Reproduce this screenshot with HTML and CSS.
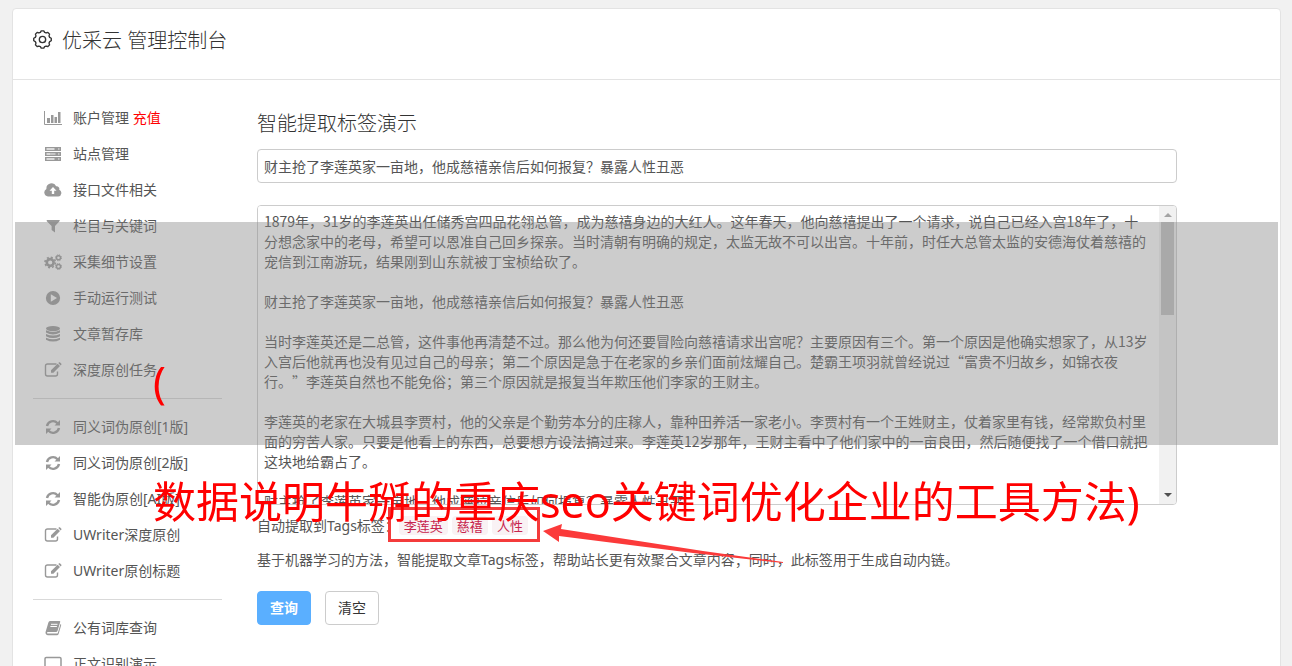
FILE: index.html
```html
<!DOCTYPE html>
<html lang="zh-CN">
<head>
<meta charset="utf-8">
<title>优采云 管理控制台</title>
<link rel="stylesheet" href="styles.css">
</head>
<body>
<svg class="sprite" aria-hidden="true">
  <symbol id="i-chart" viewBox="0 0 18 18"><path d="M.5 2v13.500H18" fill="none" stroke="currentColor"/><path d="M3 9h3v5H3zM7 6h2.500v8H7zM10.500 8h2.500v6h-2.500zM14 3h2.500v11H14z" fill="currentColor"/></symbol>
  <symbol id="i-server" viewBox="0 0 18 18"><path d="M1 2h16v4H1zM1 7h16v4H1zM1 12h16v4H1z" fill="currentColor"/><path d="M2.500 4h8M2.500 9h4M2.500 14h8" stroke="#eee" stroke-width="1.300"/><path d="M14 4h1.500M14 9h1.500M14 14h1.500" stroke="#eee" stroke-width="1"/><path d="M6.500 9h5" stroke="#ddd" stroke-width="1.300"/></symbol>
  <symbol id="i-cloud" viewBox="0 0 18 18"><path d="M4 15.500A4 4 0 0 1 2.400 8 5.200 5.200 0 0 1 12.200 5.200a2.700 2.700 0 0 1 3 3.600A3.500 3.500 0 0 1 14.300 15.500z" fill="currentColor"/><path d="M9 6 5.500 9.700h2.300V13h2.400V9.700h2.300z" fill="#fff"/></symbol>
  <symbol id="i-filter" viewBox="0 0 18 18"><path d="M3 3h12.500q.6.500 0 1.200L11 9v6.500L7.600 13V9L2.800 4.200Q2.300 3.500 3 3z" fill="currentColor"/></symbol>
  <symbol id="i-cogs" viewBox="0 0 18 18"><g fill="none" stroke="currentColor"><circle cx="6.200" cy="9.500" r="3.400" stroke-width="2.600"/><circle cx="6.200" cy="9.500" r="5.200" stroke-width="1.600" stroke-dasharray="2 2.080"/><circle cx="14.500" cy="4.800" r="2" stroke-width="1.400"/><circle cx="14.500" cy="4.800" r="3" stroke-width="1" stroke-dasharray="1.300 1.056"/><circle cx="14.500" cy="13.500" r="2" stroke-width="1.400"/><circle cx="14.500" cy="13.500" r="3" stroke-width="1" stroke-dasharray="1.300 1.056"/></g></symbol>
  <symbol id="i-play" viewBox="0 0 18 18"><circle cx="9" cy="9" r="7.100" fill="currentColor"/><path d="M6.800 5.300v7.400L13 9z" fill="#fff"/></symbol>
  <symbol id="i-db" viewBox="0 0 18 18"><g fill="currentColor"><ellipse cx="9" cy="3.600" rx="7" ry="2.600"/><path d="M2 5.300q7 3.200 14 0v2.200q-7 3.800-14 0zM2 9q7 3.200 14 0v2.200q-7 3.800-14 0zM2 12.700q7 3.200 14 0v2q-7 3.800-14 0z"/></g></symbol>
  <symbol id="i-edit" viewBox="0 0 18 18"><path d="M12.500 3H3.500Q1.500 3 1.500 5v8q0 2 2 2h8q2 0 2-2v-2.500" fill="none" stroke="currentColor" stroke-width="1.400"/><path d="M7 9.300 13.600 2.700 16 5.100 9.400 11.700H7zM14.300 2l.8-.7q.4-.3.800 0l1.500 1.500q.4.400 0 .8l-.7.800z" fill="currentColor"/></symbol>
  <symbol id="i-sync" viewBox="0 0 18 18"><path d="M3 8a6.100 6.100 0 0 1 10.500-2.800M15 10a6.100 6.100 0 0 1-10.500 2.800" fill="none" stroke="currentColor" stroke-width="2.400"/><path d="M16 2v5.500h-5.500zM2 16v-5.500h5.500z" fill="currentColor"/></symbol>
  <symbol id="i-book" viewBox="0 0 18 18"><path d="M6 2h9.500q1 .1.700 1.100L13.500 12q-.4 1-1.500 1H4q-1.200.1-1 1 .2.600 1 .6h9q.6 0 .8-.6L16.500 5q1 .4.600 1.500L14.600 15q-.4 1.200-1.600 1.200H4Q1.400 16 1.500 13.300L4.400 3.400Q4.800 2.100 6 2z" fill="currentColor"/><path d="M7 5.300h6.500M6.400 7.500h6.500" stroke="#fff"/></symbol>
  <symbol id="i-screen" viewBox="0 0 18 18"><rect x="1" y="2.500" width="16" height="11" rx="1.200" fill="none" stroke="currentColor" stroke-width="1.500"/><path d="M6 16h6" stroke="currentColor" stroke-width="1.500"/></symbol>
</svg>

<div class="card">
  <header class="header">
    <svg class="gear" viewBox="0 0 18 18" aria-hidden="true"><g fill="none" stroke="currentColor" stroke-width="1.300"><circle cx="9" cy="9" r="3"/><path d="M7 2.300 7.800.8h2.400L11 2.300l1.400.5 1.700-.5 1.600 1.600-.5 1.700.6 1.400 1.500.8v2.400l-1.500.8-.6 1.400.5 1.700-1.600 1.600-1.700-.5-1.400.5-.8 1.500H7.800L7 15.700l-1.400-.5-1.700.5-1.600-1.600.5-1.700-.6-1.400-1.500-.8V7.800L2.200 7l.6-1.400-.5-1.700 1.600-1.600 1.700.5z" stroke-linejoin="round"/></g></svg>
    <h1 class="brand">优采云 管理控制台</h1>
  </header>
  <div class="body">
    <nav class="sidebar">
      <ul class="menu">
        <li><a href="#"><svg><use href="#i-chart"/></svg><span>账户管理 <span class="hot">充值</span></span></a></li>
        <li><a href="#"><svg><use href="#i-server"/></svg><span>站点管理</span></a></li>
        <li><a href="#"><svg><use href="#i-cloud"/></svg><span>接口文件相关</span></a></li>
        <li><a href="#"><svg><use href="#i-filter"/></svg><span>栏目与关键词</span></a></li>
        <li><a href="#"><svg><use href="#i-cogs"/></svg><span>采集细节设置</span></a></li>
        <li><a href="#"><svg><use href="#i-play"/></svg><span>手动运行测试</span></a></li>
        <li><a href="#"><svg><use href="#i-db"/></svg><span>文章暂存库</span></a></li>
        <li><a href="#"><svg><use href="#i-edit"/></svg><span>深度原创任务</span></a></li>
      </ul>
      <hr class="rule">
      <ul class="menu">
        <li><a href="#"><svg><use href="#i-sync"/></svg><span>同义词伪原创[1版]</span></a></li>
        <li><a href="#"><svg><use href="#i-sync"/></svg><span>同义词伪原创[2版]</span></a></li>
        <li><a href="#"><svg><use href="#i-sync"/></svg><span>智能伪原创[AI版]</span></a></li>
        <li><a href="#"><svg><use href="#i-edit"/></svg><span>UWriter深度原创</span></a></li>
        <li><a href="#"><svg><use href="#i-edit"/></svg><span>UWriter原创标题</span></a></li>
      </ul>
      <hr class="rule">
      <ul class="menu">
        <li><a href="#"><svg><use href="#i-book"/></svg><span>公有词库查询</span></a></li>
        <li><a href="#"><svg><use href="#i-screen"/></svg><span>正文识别演示</span></a></li>
      </ul>
    </nav>
    <main class="main">
      <h2 class="title">智能提取标签演示</h2>
      <input class="field" type="text" aria-label="标题" value="财主抢了李莲英家一亩地，他成慈禧亲信后如何报复？暴露人性丑恶">
      <div class="editor">
        <textarea class="text" aria-label="正文">1879年，31岁的李莲英出任储秀宫四品花翎总管，成为慈禧身边的大红人。这年春天，他向慈禧提出了一个请求，说自己已经入宫18年了，十分想念家中的老母，希望可以恩准自己回乡探亲。当时清朝有明确的规定，太监无故不可以出宫。十年前，时任大总管太监的安德海仗着慈禧的宠信到江南游玩，结果刚到山东就被丁宝桢给砍了。

财主抢了李莲英家一亩地，他成慈禧亲信后如何报复？暴露人性丑恶

当时李莲英还是二总管，这件事他再清楚不过。那么他为何还要冒险向慈禧请求出宫呢？主要原因有三个。第一个原因是他确实想家了，从13岁入宫后他就再也没有见过自己的母亲；第二个原因是急于在老家的乡亲们面前炫耀自己。楚霸王项羽就曾经说过“富贵不归故乡，如锦衣夜行。”李莲英自然也不能免俗；第三个原因就是报复当年欺压他们李家的王财主。

李莲英的老家在大城县李贾村，他的父亲是个勤劳本分的庄稼人，靠种田养活一家老小。李贾村有一个王姓财主，仗着家里有钱，经常欺负村里面的穷苦人家。只要是他看上的东西，总要想方设法搞过来。李莲英12岁那年，王财主看中了他们家中的一亩良田，然后随便找了一个借口就把这块地给霸占了。

财主抢了李莲英家一亩地，他成慈禧亲信后如何报复？暴露人性丑恶</textarea>
        <div class="scrollbar" aria-hidden="true"><i class="up"></i><i class="thumb"></i><i class="down"></i></div>
      </div>
      <div class="tags">自动提取到Tags标签：<span class="marked"><code>李莲英</code><code>慈禧</code><code>人性</code>
        <svg class="arrow" viewBox="0 0 240 42" aria-hidden="true"><path d="M0 9 19 2 18 7 160 29 240 40v1L150 31 16 14 16 20z" fill="#fb3a3a"/></svg></span></div>
      <p class="note">基于机器学习的方法，智能提取文章Tags标签，帮助站长更有效聚合文章内容；同时，此标签用于生成自动内链。</p>
      <div class="actions">
        <button class="btn primary" type="button">查询</button>
        <button class="btn" type="button">清空</button>
      </div>
    </main>
  </div>
</div>
<div class="band"></div>
<div class="caption">(<br>数据说明牛掰的重庆seo关键词优化企业的工具方法)</div>
</body>
</html>
```
FILE: styles.css
```css
* { box-sizing: border-box; }

body {
  position: relative;
  height: 100vh;
  margin: 0;
  padding: 8px 11px 0 12px;
  overflow: hidden;
  background: #f1f1f1;
  color: #555;
  font: 14px/20px "Noto Sans", "Noto Sans CJK SC", sans-serif;
}

.sprite { display: none; }

.card {
  background: #fff;
  border: 1px solid #e3e3e3;
  border-radius: 4px;
}

.header {
  display: flex;
  align-items: center;
  gap: 10px;
  height: 71px;
  padding: 0 20px 6px;
  border-bottom: 1px solid #e3e3e3;
  color: #333;
}

.gear { width: 19px; height: 19px; margin-bottom: 4px; }

.brand {
  margin: 0;
  font-size: 20px;
  font-weight: 300;
  line-height: 28px;
}

.body {
  display: flex;
  gap: 35px;
  padding: 20px;
}

.sidebar { flex: 0 0 189px; }

.menu { margin: 0; padding: 0; list-style: none; }

.menu a {
  display: flex;
  align-items: center;
  gap: 11px;
  height: 36px;
  padding-left: 11px;
  color: #555;
  text-decoration: none;
}

.menu svg { width: 18px; height: 18px; color: #999; }

.hot { color: #f00; }

.rule {
  margin: 10px 0;
  border: 0;
  border-top: 1px solid #d9d9d9;
}

.main { flex: 1; padding: 9px 83px 0 0; }

.title {
  margin: 0 0 10px;
  color: #333;
  font-size: 20px;
  font-weight: 300;
  line-height: 30px;
}

.field {
  display: block;
  width: 100%;
  height: 34px;
  padding: 6px;
  border: 1px solid #ccc;
  border-radius: 4px;
  color: #555;
  font: inherit;
}

.editor {
  display: flex;
  height: 300px;
  margin: 22px 0 11px;
  overflow: hidden;
  border: 1px solid #ccc;
  border-radius: 4px;
}

.text {
  flex: 1;
  padding: 5px 9px 5px 6px;
  border: 0;
  outline: 0;
  resize: none;
  scrollbar-width: none;
  text-spacing-trim: space-all;
  color: #555;
  font: 14px/20px "Noto Sans CJK SC", sans-serif;
}

.scrollbar {
  display: flex;
  flex-direction: column;
  align-items: center;
  width: 17px;
  padding: 7px 0;
  background: #f1f1f1;
}

.up, .down { border: 4px solid transparent; }
.up { border-top: 0; border-bottom-color: #a3a3a3; }
.down { margin-top: auto; border-bottom: 0; border-top-color: #505050; }
.thumb { width: 13px; height: 93px; margin-top: 5px; background: #c1c1c1; }

.tags { line-height: 20px; }

.marked { position: relative; display: inline-flex; gap: 4px; }

.marked::before {
  content: "";
  position: absolute;
  inset: -9px -12px -7px -11px;
  border: 3px solid #f43b3b;
}

.marked code {
  padding: 0 5px;
  border-radius: 4px;
  background: #f9f2f4;
  color: #c7254e;
  font: 13px/19px "Noto Sans CJK SC", monospace;
}

.arrow {
  position: absolute;
  top: 6px;
  left: 100%;
  width: 240px;
  height: 42px;
  margin-left: 15px;
}

.note { margin: 14px 0 21px; }

.actions { display: flex; gap: 14px; }

.btn {
  height: 34px;
  padding: 0 12px;
  border: 1px solid #ccc;
  border-radius: 4px;
  background: #fff;
  color: #333;
  font: inherit;
}

.primary {
  border-color: #5aafff;
  background: #5aafff;
  color: #fff;
  font-weight: 700;
}

/* Translucent band and headline laid over the page */
.band {
  position: absolute;
  top: 222px;
  right: 14px;
  left: 15px;
  height: 223px;
  background: rgba(136, 136, 136, .43);
}

.caption {
  position: absolute;
  top: 322px;
  left: 153px;
  color: #f00;
  font-size: 43px;
  line-height: 120px;
  white-space: nowrap;
}
```
